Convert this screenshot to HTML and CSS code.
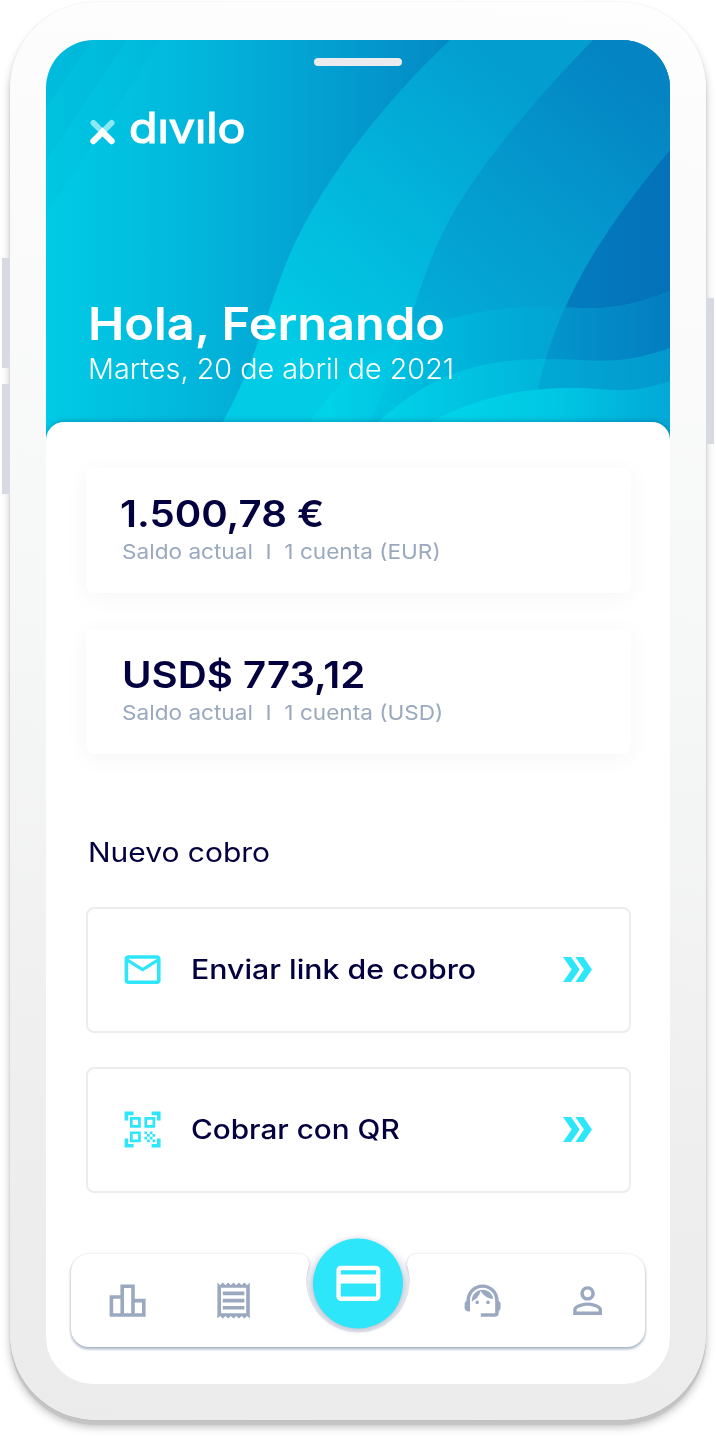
FILE: index.html
```html
<!DOCTYPE html>
<html lang="es">
<head>
<meta charset="utf-8">
<title>divilo</title>
<link rel="stylesheet" href="styles.css">
</head>
<body>
<div class="device">
  <span class="key key-up"></span><span class="key key-down"></span><span class="key key-power"></span>
  <div class="screen">
    <header class="hero">
      <svg class="hero-art" viewBox="46 40 624 400" aria-hidden="true">
        <defs>
          <linearGradient id="base" gradientUnits="userSpaceOnUse" x1="46" y1="0" x2="670" y2="0">
            <stop offset="0" stop-color="#00cbe5"/><stop offset=".22" stop-color="#02b8dc"/><stop offset=".45" stop-color="#039fd1"/><stop offset=".65" stop-color="#0489c5"/><stop offset=".86" stop-color="#047abe"/><stop offset="1" stop-color="#0471b9"/>
          </linearGradient>
          <linearGradient id="bandA" gradientUnits="userSpaceOnUse" x1="270" y1="330" x2="500" y2="60">
            <stop offset="0" stop-color="#01cbe5"/><stop offset=".45" stop-color="#02b7dc"/><stop offset="1" stop-color="#039dd0"/>
          </linearGradient>
          <linearGradient id="bandB" gradientUnits="userSpaceOnUse" x1="370" y1="410" x2="650" y2="90">
            <stop offset="0" stop-color="#01c3e1"/><stop offset=".3" stop-color="#03a9d6"/><stop offset=".65" stop-color="#0498cd"/><stop offset="1" stop-color="#0484c3"/>
          </linearGradient>
          <linearGradient id="waveA" gradientUnits="userSpaceOnUse" x1="330" y1="0" x2="670" y2="0">
            <stop offset="0" stop-color="#00d2e8"/><stop offset=".35" stop-color="#01b9dd"/><stop offset=".64" stop-color="#03a8d6"/><stop offset="1" stop-color="#0492ca"/>
          </linearGradient>
          <linearGradient id="waveA2" gradientUnits="userSpaceOnUse" x1="540" y1="0" x2="670" y2="0">
            <stop offset="0" stop-color="#0397cd"/><stop offset="1" stop-color="#047dc0"/>
          </linearGradient>
          <linearGradient id="waveB" gradientUnits="userSpaceOnUse" x1="380" y1="0" x2="670" y2="0">
            <stop offset="0" stop-color="#00d2e9"/><stop offset=".5" stop-color="#01b8dc"/><stop offset="1" stop-color="#03a0d2"/>
          </linearGradient>
          <linearGradient id="waveC" gradientUnits="userSpaceOnUse" x1="430" y1="0" x2="670" y2="0">
            <stop offset="0" stop-color="#00d5ea"/><stop offset=".5" stop-color="#00c8e4"/><stop offset="1" stop-color="#02a9d7"/>
          </linearGradient>
          <clipPath id="waveClip"><path d="M310 440V422C350 362 420 307 539 307C590 307 610 315 670 291V440Z"/></clipPath>
          <clipPath id="innerClip"><path d="M670 150C615 216 560 290 538 388V440H670Z"/></clipPath>
        </defs>
        <rect x="46" y="40" width="624" height="400" fill="url(#base)"/>
        <path d="M46 40H92L46 108Z" fill="#0498c8" fill-opacity=".13"/>
        <path d="M46 40H127L46 162Z" fill="#0498c8" fill-opacity=".1"/>
        <path d="M46 40H160L46 215Z" fill="#0498c8" fill-opacity=".07"/>
        <path d="M450 40C395 92 325 173 290 254C267 308 254 370 218 430V440H670V40Z" fill="url(#bandA)"/>
        <path d="M593 40C540 94 474 170 444 230C414 290 403 362 365 430V440H670V40Z" fill="url(#bandB)"/>
        <path d="M670 150C615 216 560 290 538 388V440H670Z" fill="url(#base)"/>
        <path d="M310 440V422C350 362 420 307 539 307C590 307 610 315 670 291V440Z" fill="url(#waveA)"/>
        <path clip-path="url(#waveClip)" d="M593 40C540 94 474 170 444 230C414 290 403 362 365 430V440H540V388C560 290 615 216 670 150V40Z" fill="#0390c8" fill-opacity=".07"/>
        <path clip-path="url(#waveClip)" d="M670 150C615 216 560 290 538 388V440H670Z" fill="url(#waveA2)"/>
        <path d="M365 440L378 422C425 380 470 359 546 359C592 359 617 367 670 348V440Z" fill="url(#waveB)"/>
        <path clip-path="url(#innerClip)" d="M530 359H546C592 359 617 367 670 348V400H530Z" fill="#0485c4" fill-opacity=".25"/>
        <path d="M400 440L431 422C475 398 520 388 573 388C611 388 625 396 670 381V440Z" fill="url(#waveC)"/>
      </svg>
      <span class="speaker"></span>
      <div class="brand">
        <svg class="brand-mark" viewBox="0 0 26 26" aria-hidden="true">
          <path d="M3.5 3.5L13 13L22.5 3.5" fill="none" stroke="#8ce8f3" stroke-width="6" stroke-linecap="round"/>
          <path d="M3.5 22.5L13 13L22.5 22.5" fill="none" stroke="#fff" stroke-width="6.5" stroke-linecap="round" stroke-linejoin="miter"/>
        </svg>
        <span class="brand-name t">dıvılo</span>
      </div>
      <h1 class="greeting t">Hola, Fernando</h1>
      <p class="date t">Martes, 20 de abril de 2021</p>
    </header>
    <main class="sheet">
      <section class="balance">
        <p class="amount amount-eur t">1.500,78 €</p>
        <p class="account t">Saldo actual &nbsp;I&nbsp; 1 cuenta (EUR)</p>
      </section>
      <section class="balance">
        <p class="amount t">USD$ 773,12</p>
        <p class="account t">Saldo actual &nbsp;I&nbsp; 1 cuenta (USD)</p>
      </section>
      <h2 class="section-title t">Nuevo cobro</h2>
      <a class="action">
        <svg class="icon" viewBox="0 0 24 24"><path d="M22 6c0-1.1-.9-2-2-2H4c-1.100 0-2 .9-2 2v12c0 1.100.9 2 2 2h16c1.100 0 2-.9 2-2V6zm-2 0l-8 4.990L4 6h16zm0 12H4V8l8 5 8-5v10z"/></svg>
        <span class="action-label label-link t">Enviar link de cobro</span>
        <svg class="chevrons" viewBox="0 0 87 75"><path d="M0 0H24L50 37.500L24 75H0L26 37.500ZM37 0H61L87 37.500L61 75H37L63 37.500Z"/></svg>
      </a>
      <a class="action">
        <svg class="icon" viewBox="0 0 24 24"><path d="M9.500 6.500v3h-3v-3h3M11 5H5v6h6V5zm-1.500 9.500v3h-3v-3h3M11 13H5v6h6v-6zm6.500-6.500v3h-3v-3h3M19 5h-6v6h6V5zm-6 8h1.500v1.500H13V13zm1.500 1.500H16V16h-1.500v-1.500zM16 13h1.500v1.500H16V13zm-3 3h1.500v1.500H13V16zm1.500 1.500H16V19h-1.500v-1.500zM16 16h1.500v1.500H16V16zm1.500-1.500H19V16h-1.500v-1.500zm0 3H19V19h-1.500v-1.500zM22 7h-2V4h-3V2h5v5zm0 15v-5h-2v3h-3v2h5zM2 22h5v-2H4v-3H2v5zM2 2v5h2V4h3V2H2z"/></svg>
        <span class="action-label label-qr t">Cobrar con QR</span>
        <svg class="chevrons" viewBox="0 0 87 75"><path d="M0 0H24L50 37.500L24 75H0L26 37.500ZM37 0H61L87 37.500L61 75H37L63 37.500Z"/></svg>
      </a>
      <nav class="tabs">
        <svg class="tabs-bg" viewBox="51 1224 614 150" aria-hidden="true">
          <defs>
            <linearGradient id="ringFade" gradientUnits="userSpaceOnUse" x1="0" y1="1250" x2="0" y2="1285">
              <stop offset="0" stop-color="#e5e9f0" stop-opacity="0"/><stop offset="1" stop-color="#e5e9f0"/>
            </linearGradient>
          </defs>
          <path class="plate" d="M89 1254H301Q309 1255 309 1265A51.500 51.500 0 1 0 407 1265Q407 1255 415 1254H627A18 18 0 0 1 645 1272V1329A18 18 0 0 1 627 1347H89A18 18 0 0 1 71 1329V1272A18 18 0 0 1 89 1254Z"/>
          <path d="M309 1265A51.500 51.500 0 1 0 407 1265A52 52 0 0 0 309 1265Z" fill="url(#ringFade)"/>
          <circle class="disc" cx="358" cy="1283.500" r="45"/>
        </svg>
        <svg class="tab" viewBox="0 0 24 24"><path d="M16 11V3H8v6H2v12h20V11h-6zm-6-6h4v14h-4V5zm-6 6h4v8H4v-8zm16 8h-4v-6h4v6z"/></svg>
        <svg class="tab" viewBox="0 0 24 24"><path d="M19.500 3.500L18 2l-1.500 1.500L15 2l-1.500 1.500L12 2l-1.500 1.500L9 2 7.500 3.500 6 2 4.500 3.500 3 2v20l1.500-1.500L6 22l1.500-1.500L9 22l1.500-1.500L12 22l1.500-1.500L15 22l1.500-1.500L18 22l1.500-1.500L21 22V2l-1.500 1.500zM19 19.090H5V4.910h14v14.180zM6 15h12v2H6zm0-4h12v2H6zm0-4h12v2H6z"/></svg>
        <svg class="tab tab-main" viewBox="0 0 24 24"><path d="M20 4H4c-1.110 0-1.990.89-1.990 2L2 18c0 1.110.89 2 2 2h16c1.110 0 2-.89 2-2V6c0-1.110-.89-2-2-2zm0 14H4v-6h16v6zm0-10H4V6h16v2z"/></svg>
        <svg class="tab" viewBox="0 0 24 24"><path d="M21 12.220C21 6.730 16.740 3 12 3c-4.690 0-9 3.650-9 9.280-.6.34-1 .98-1 1.720v2c0 1.100.9 2 2 2h1v-6.100c0-3.870 3.130-7 7-7s7 3.130 7 7V19h-8v2h8c1.100 0 2-.9 2-2v-1.220c.59-.31 1-.92 1-1.640v-2.300c0-.7-.41-1.310-1-1.620z"/><circle cx="9" cy="13" r="1"/><circle cx="15" cy="13" r="1"/><path d="M18 11.030C17.520 8.180 15.040 6 12.050 6c-3.030 0-6.290 2.510-6.030 6.450 2.470-1.010 4.330-3.210 4.860-5.890 1.310 2.630 4 4.440 7.120 4.470z"/></svg>
        <svg class="tab" viewBox="0 0 24 24"><path d="M12 5.900c1.160 0 2.100.94 2.100 2.100s-.94 2.100-2.100 2.100S9.900 9.160 9.900 8s.94-2.100 2.100-2.100m0 9c2.970 0 6.100 1.460 6.100 2.100v1.100H5.900V17c0-.64 3.130-2.100 6.100-2.100M12 4C9.790 4 8 5.790 8 8s1.790 4 4 4 4-1.790 4-4-1.790-4-4-4zm0 9c-2.670 0-8 1.340-8 4v3h16v-3c0-2.660-5.330-4-8-4z"/></svg>
      </nav>
    </main>
  </div>
</div>
</body>
</html>
```
FILE: styles.css
```css
* { box-sizing: border-box; }
body {
  margin: 0;
  padding: 2px 10px 18px;
  background: #fff;
  font-family: Inter, "Open Sans", sans-serif;
  color: #03003f;
  overflow: hidden;
}
h1, h2, p { margin: 0; }
.t { width: max-content; white-space: nowrap; transform-origin: 0 50%; }

.device {
  position: relative;
  width: 696px;
  height: 1418px;
  padding: 38px 36px 36px;
  border-radius: 86px;
  background: linear-gradient(186deg, #fefefe 0%, #fbfbfb 15%, #f6f7f7 45%, #efefef 75%, #ebebec 100%);
  box-shadow: 0 0 1px rgba(0, 0, 0, .2), 0 5px 1px #c4c4c4, 0 7px 9px rgba(0, 0, 0, .25);
}
.key { position: absolute; width: 8px; background: #d7dbe1; }
.key-up { left: -8px; top: 256px; height: 110px; }
.key-down { left: -8px; top: 382px; height: 110px; }
.key-power { right: -8px; top: 296px; height: 146px; }

.screen {
  height: 1344px;
  border-radius: 48px;
  background: #fff;
  overflow: hidden;
}
.hero {
  position: relative;
  display: flex;
  flex-direction: column;
  height: 382px;
  padding: 18px 42px 0;
  color: #fff;
}
.hero-art { position: absolute; left: 0; top: 0; width: 624px; height: 400px; }
.speaker {
  position: relative;
  align-self: center;
  flex: none;
  width: 88px;
  height: 8px;
  border-radius: 4px;
  background: #ebebee;
}
.brand {
  position: relative;
  display: flex;
  flex: none;
  align-items: flex-end;
  gap: 14px;
  height: 80px;
  margin-bottom: 150px;
  padding-left: 2px;
}
.brand-mark { width: 25px; height: 26px; margin-bottom: 1.5px; overflow: visible; }
.brand-name {
  font-size: 42px;
  line-height: 40px;
  font-weight: 400;
  margin-bottom: -2px;
  transform: scaleX(1.11);
  -webkit-text-stroke: 1.2px #fff;
}
.greeting { position: relative; font-size: 45px; line-height: 56px; font-weight: 600; transform: scaleX(1.083); }
.date { position: relative; font-size: 28px; line-height: 34px; font-weight: 300; transform: scaleX(1.028); }

.sheet {
  position: relative;
  height: 962px;
  padding: 46px 39px 0 40px;
  border-radius: 18px 18px 0 0;
  background: #fff;
  box-shadow: 0 -1px 5px rgba(0, 60, 110, .35);
}
.balance {
  height: 125px;
  margin-bottom: 36px;
  padding: 24px 36px 0;
  border-radius: 8px;
  background: #fff;
  box-shadow: 0 4px 24px rgba(20, 30, 40, .045);
}
.amount { font-size: 37px; line-height: 44px; font-weight: 600; transform: scaleX(1.086); }
.amount-eur { margin-left: -2px; }
.account { font-size: 20.5px; line-height: 32px; color: #9ba9be; transform: scaleX(1.102); }
.section-title { margin: 82px 0 37px 2px; font-size: 27px; line-height: 34px; font-weight: 400; transform: scaleX(1.11); }
.action {
  display: flex;
  align-items: center;
  height: 126px;
  margin-bottom: 34px;
  padding: 0 37px 0 32.5px;
  border: 2px solid #ebecf0;
  border-radius: 8px;
}
.icon { width: 43.2px; height: 43.2px; margin-right: 27px; fill: #2de6fa; }
.action-label { font-size: 27px; line-height: 34px; font-weight: 550; margin-top: -1px; }
.label-link { transform: scaleX(1.122); }
.label-qr { transform: scaleX(1.1); }
.chevrons { width: 29px; height: 25px; margin: -1px 0 0 auto; fill: #2de6fa; }

.tabs {
  position: relative;
  display: flex;
  justify-content: center;
  align-items: center;
  gap: 62.2px;
  height: 94px;
  margin: 61px -14px 0 -15px;
}
.tabs-bg { position: absolute; left: -20px; top: -30px; width: 614px; height: 150px; overflow: visible; }
.plate { fill: #fff; filter: drop-shadow(0 2px 1.5px rgba(110, 135, 165, .6)) drop-shadow(0 0 1px rgba(0, 0, 0, .12)); }
.disc { fill: #2de6fa; filter: drop-shadow(0 1px 3px rgba(80, 90, 120, .35)); }
.tab { position: relative; flex: none; width: 43.2px; height: 43.2px; fill: #9aa9bf; }
.tab-main { width: 52.8px; height: 52.8px; margin: -35px 14.5px 0; fill: #fff; }
```
